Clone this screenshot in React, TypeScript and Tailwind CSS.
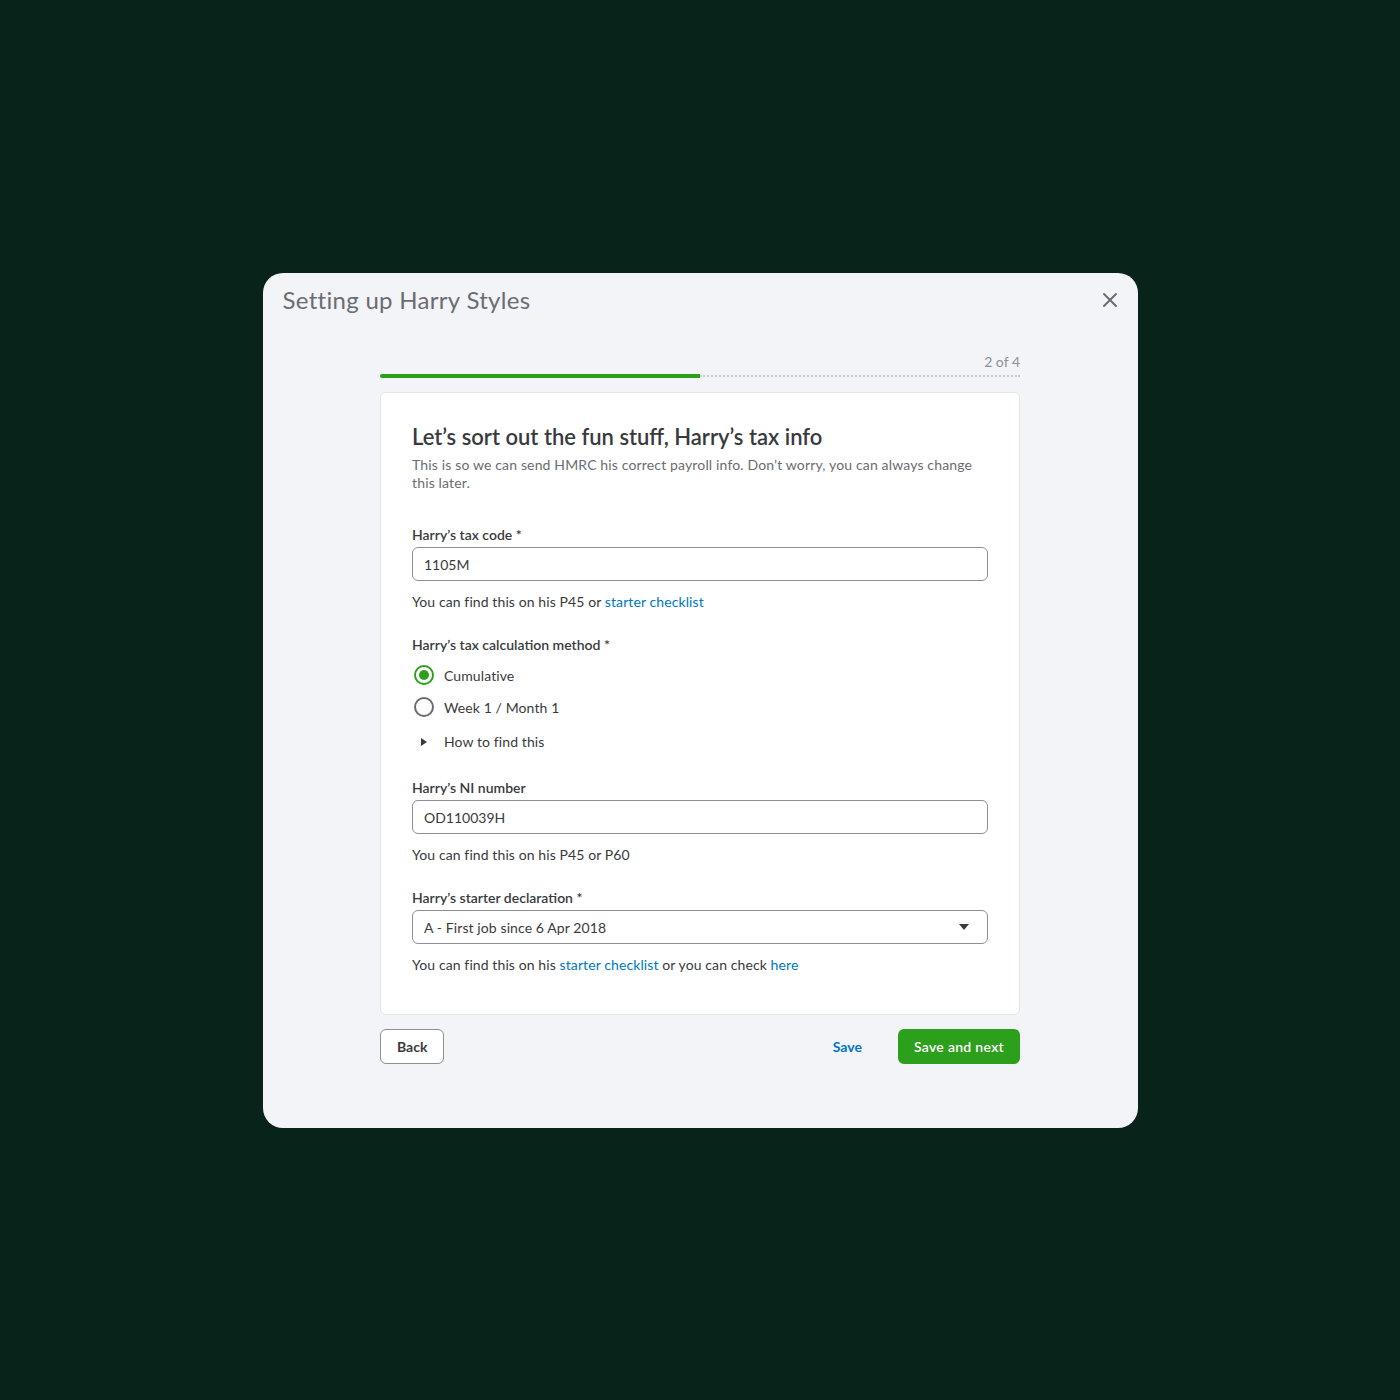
import React, { useState } from "react";

const font = { fontFamily: "Lato, 'Noto Sans', sans-serif" };

const Label = ({ children }: { children: React.ReactNode }) => (
    <div className="text-[14px] leading-[20px] font-semibold text-[#393a3d]">{children}</div>
);

const Help = ({ children }: { children: React.ReactNode }) => (
    <p className="text-[14px] leading-[20px] text-[#393a3d] tracking-[0.1px]">{children}</p>
);

const Link = ({ children }: { children: React.ReactNode }) => (
    <a className="text-[#0077c5] cursor-pointer">{children}</a>
);

const Radio = ({ checked, label, onClick }: { checked: boolean; label: string; onClick: () => void }) => (
    <button onClick={onClick} className="flex items-center gap-[10px] h-[24px] pl-[2px]">
        <span
            className={
                checked
                    ? "w-[20px] h-[20px] rounded-full border-2 border-[#2ca01c] flex items-center justify-center"
                    : "w-[20px] h-[20px] rounded-full border-2 border-[#6b6c72]"
            }
        >
            {checked && <span className="w-[10px] h-[10px] rounded-full bg-[#2ca01c]" />}
        </span>
        <span className="text-[14px] text-[#393a3d] tracking-[0.1px]">{label}</span>
    </button>
);

export default function App() {
    const [method, setMethod] = useState("cumulative");

    return (
        <div style={font} className="min-h-[1400px] w-full bg-[#08231a] flex items-start justify-center pt-[273px]">
            <div className="w-[875px] h-[855px] bg-[#f3f4f7] rounded-[20px] flex flex-col">
                {/* Header */}
                <div className="flex items-center justify-between pl-[20px] pr-[18px] h-[56px]">
                    <h1 className="text-[24px] text-[#6b6c72] tracking-[0.3px] -mt-[3px]">Setting up Harry Styles</h1>
                    <button className="text-[#6b6c72] -mt-[2px]">
                        <svg width="20" height="20" viewBox="0 0 20 20" fill="none" stroke="currentColor" strokeWidth="2" strokeLinecap="round">
                            <path d="M4 4l12 12M16 4L4 16" />
                        </svg>
                    </button>
                </div>

                <div className="w-[640px] mx-auto flex flex-col">
                    {/* Progress */}
                    <div className="flex justify-end text-[14px] leading-[18px] text-[#8d9096] mt-[24px]">2 of 4</div>
                    <div className="flex items-center mt-[3px] h-[4px]">
                        <div className="w-[320px] h-[4px] bg-[#2ca01c] rounded-l-full" />
                        <div className="flex-1 h-[2px] border-t-2 border-dotted border-[#c8cacd]" />
                    </div>

                    {/* Card */}
                    <div className="mt-[14px] bg-white border border-[#e3e5e8] rounded-[6px] px-[31px] pt-[29px] pb-[39px]">
                        <h2 className="text-[22px] leading-[30px] font-semibold text-[#393a3d]">
                            Let’s sort out the fun stuff, Harry’s tax info
                        </h2>
                        <p className="mt-[4px] text-[14px] leading-[18px] text-[#6b6c72] tracking-[0.15px]">
                            This is so we can send HMRC his correct payroll info. Don’t worry, you can always change this later.
                        </p>

                        <div className="mt-[33px]">
                            <Label>Harry’s tax code *</Label>
                            <input
                                defaultValue="1105M"
                                className="mt-[2px] w-full h-[34px] px-[11px] border border-[#8d9096] rounded-[6px] text-[14px] text-[#393a3d] outline-none"
                            />
                            <div className="mt-[11px]">
                                <Help>
                                    You can find this on his P45 or <Link>starter checklist</Link>
                                </Help>
                            </div>
                        </div>

                        <div className="mt-[23px]">
                            <Label>Harry’s tax calculation method *</Label>
                            <div className="mt-[8px] flex flex-col gap-[8px]">
                                <Radio checked={method === "cumulative"} label="Cumulative" onClick={() => setMethod("cumulative")} />
                                <Radio checked={method === "week1"} label="Week 1 / Month 1" onClick={() => setMethod("week1")} />
                            </div>
                            <button className="mt-[12px] flex items-center gap-[16px] pl-[8px] text-[14px] text-[#393a3d] tracking-[0.1px]">
                                <svg width="8" height="10" viewBox="0 0 8 10">
                                    <path d="M1 1l6 4-6 4z" fill="#393a3d" />
                                </svg>
                                How to find this
                            </button>
                        </div>

                        <div className="mt-[26px]">
                            <Label>Harry’s NI number</Label>
                            <input
                                defaultValue="OD110039H"
                                className="mt-[2px] w-full h-[34px] px-[11px] border border-[#8d9096] rounded-[6px] text-[14px] text-[#393a3d] outline-none"
                            />
                            <div className="mt-[11px]">
                                <Help>You can find this on his P45 or P60</Help>
                            </div>
                        </div>

                        <div className="mt-[23px]">
                            <Label>Harry’s starter declaration *</Label>
                            <div className="mt-[2px] w-full h-[34px] px-[11px] border border-[#8d9096] rounded-[6px] flex items-center justify-between">
                                <span className="text-[14px] text-[#393a3d] tracking-[0.1px]">A - First job since 6 Apr 2018</span>
                                <svg width="12" height="8" viewBox="0 0 12 8" className="mr-[6px]">
                                    <path d="M1 1h10L6 7z" fill="#393a3d" />
                                </svg>
                            </div>
                            <div className="mt-[11px]">
                                <Help>
                                    You can find this on his <Link>starter checklist</Link> or you can check <Link>here</Link>
                                </Help>
                            </div>
                        </div>
                    </div>

                    {/* Footer */}
                    <div className="mt-[14px] flex items-center justify-between">
                        <button className="h-[35px] px-[16px] bg-white border border-[#8d9096] rounded-[6px] text-[14px] font-bold text-[#393a3d]">
                            Back
                        </button>
                        <div className="flex items-center gap-[36px]">
                            <button className="text-[14px] font-bold text-[#0077c5]">Save</button>
                            <button className="h-[35px] px-[16px] bg-[#2ca01c] rounded-[6px] text-[14px] font-semibold text-white tracking-[0.3px]">
                                Save and next
                            </button>
                        </div>
                    </div>
                </div>
            </div>
        </div>
    );
}
